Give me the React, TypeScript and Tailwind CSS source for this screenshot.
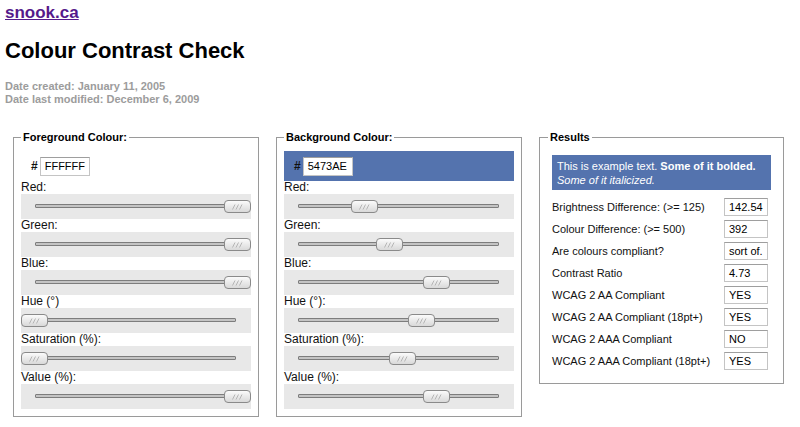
import React from "react";

function Grip() {
  return (
    <svg width="11" height="6" viewBox="0 0 11 6" className="block">
      <line x1="0.5" y1="5.5" x2="3" y2="0.5" stroke="#b5b5b5" strokeWidth="1" />
      <line x1="4" y1="5.5" x2="6.5" y2="0.5" stroke="#b5b5b5" strokeWidth="1" />
      <line x1="7.5" y1="5.5" x2="10" y2="0.5" stroke="#b5b5b5" strokeWidth="1" />
    </svg>
  );
}

function Slider({ frac }: { frac: number }) {
  return (
    <div className="relative h-[25px] bg-[#e8e8e8]">
      <div className="absolute left-[14px] right-[15px] top-[10px] h-[4px] rounded-[1px] border border-[#7d7d7d] bg-[#c4c4c4]" />
      <div
        className="absolute top-[6px] flex h-[13px] w-[27px] items-center justify-center rounded-[4px] border border-[#8a8a8a] bg-gradient-to-b from-[#fbfbfb] to-[#d9d9d9]"
        style={{ left: Math.round(frac * 203) }}
      >
        <Grip />
      </div>
    </div>
  );
}

function Group({ label, frac }: { label: string; frac: number }) {
  return (
    <div>
      <div className="h-[13px] text-[12px] leading-[13px] text-[#111]">{label}</div>
      <Slider frac={frac} />
    </div>
  );
}

function ColourSet({
  title,
  hex,
  swatch,
  values,
}: {
  title: string;
  hex: string;
  swatch: string;
  values: [string, number][];
}) {
  return (
    <fieldset className="w-[246px] border border-[#9a9a9a] px-[7px] pb-[7px] pt-[7px]">
      <legend className="px-[2px] text-[11px] font-bold leading-[14px] text-black">{title}</legend>
      <div className="flex h-[30px] items-center pl-[10px]" style={{ backgroundColor: swatch }}>
        <span className="text-[12px] font-bold text-[#111]">#</span>
        <div className="ml-[2px] flex h-[19px] w-[50px] items-center border border-[#c4c4c4] border-t-[#9e9e9e] bg-white pl-[4px] text-[11px] text-black">
          {hex}
        </div>
      </div>
      {values.map(([l, f]) => (
        <Group key={l} label={l} frac={f} />
      ))}
    </fieldset>
  );
}

const results: [string, string][] = [
  ["Brightness Difference: (>= 125)", "142.54"],
  ["Colour Difference: (>= 500)", "392"],
  ["Are colours compliant?", "sort of."],
  ["Contrast Ratio", "4.73"],
  ["WCAG 2 AA Compliant", "YES"],
  ["WCAG 2 AA Compliant (18pt+)", "YES"],
  ["WCAG 2 AAA Compliant", "NO"],
  ["WCAG 2 AAA Compliant (18pt+)", "YES"],
];

export default function App() {
  return (
    <div
      className="h-[427px] w-[800px] overflow-hidden bg-white px-[5px] pt-[3px] text-black"
      style={{ fontFamily: '"Liberation Sans", Arial, sans-serif' }}
    >
      <div className="text-[17px] font-bold leading-[20px]">
        <a href="#" className="text-[#551a8b] underline">
          snook.ca
        </a>
      </div>
      <h1 className="mt-[14px] text-[22px] font-bold leading-[28px]">Colour Contrast Check</h1>
      <div className="mt-[15px] text-[11px] font-bold leading-[13px] text-[#9c9c9c]">
        <div>Date created: January 11, 2005</div>
        <div>Date last modified: December 6, 2009</div>
      </div>
      <div className="mt-[24px] flex items-start gap-[17px] pl-[8px]">
        <ColourSet
          title="Foreground Colour:"
          hex="FFFFFF"
          swatch="#FFFFFF"
          values={[
            ["Red:", 1],
            ["Green:", 1],
            ["Blue:", 1],
            ["Hue (°)", 0],
            ["Saturation (%):", 0],
            ["Value (%):", 1],
          ]}
        />
        <ColourSet
          title="Background Colour:"
          hex="5473AE"
          swatch="#5473AE"
          values={[
            ["Red:", 84 / 255],
            ["Green:", 115 / 255],
            ["Blue:", 174 / 255],
            ["Hue (°):", 219.3 / 360],
            ["Saturation (%):", 90 / 174],
            ["Value (%):", 174 / 255],
          ]}
        />
        <fieldset className="w-[245px] border border-[#9a9a9a] px-[12px] pb-[11px] pt-[11px]">
          <legend className="-ml-[4px] px-[2px] text-[11px] font-bold leading-[14px] text-black">Results</legend>
          <div className="bg-[#5473AE] px-[5px] pb-[3px] pt-[4px] text-[11px] leading-[14px] text-white">
            This is example text. <b>Some of it bolded.</b>
            <br />
            <i>Some of it italicized.</i>
          </div>
          <div className="mt-[6px]">
            {results.map(([l, v]) => (
              <div key={l} className="flex h-[22px] items-center justify-between pr-[3px]">
                <span className="text-[11px] text-[#111]">{l}</span>
                <span className="flex h-[18px] w-[44px] items-center border border-[#c4c4c4] border-t-[#9e9e9e] bg-white pl-[4px] text-[11px] text-black">
                  {v}
                </span>
              </div>
            ))}
          </div>
        </fieldset>
      </div>
    </div>
  );
}
